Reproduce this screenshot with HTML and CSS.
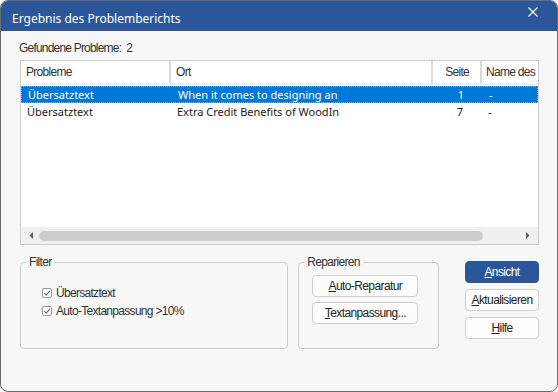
FILE: index.html
```html
<!DOCTYPE html>
<html lang="de">
<head>
  <meta charset="UTF-8" />
  <title>Ergebnis des Problemberichts</title>
  <link rel="stylesheet" href="styles.css">
</head>
<body>
  <div class="dialog">
    <div class="titlebar">
      <span class="title">Ergebnis des Problemberichts</span>
      <svg class="close" width="10" height="10" viewBox="0 0 10 10">
        <path d="M0.5 0.5 L9.5 9.5 M9.5 0.5 L0.5 9.5" stroke="#fff" stroke-width="1.1" fill="none"/>
      </svg>
    </div>

    <div class="content">
      <div class="found">Gefundene Probleme:&nbsp; 2</div>

      <div class="list">
        <div class="list-head">
          <div class="col">Probleme</div>
          <div class="col">Ort</div>
          <div class="col num">Seite</div>
          <div class="col">Name des</div>
        </div>
        <div class="row selected">
          <div class="cell">Übersatztext</div>
          <div class="cell">When it comes to designing an</div>
          <div class="cell num">1</div>
          <div class="cell">-</div>
        </div>
        <div class="row">
          <div class="cell">Übersatztext</div>
          <div class="cell">Extra Credit Benefits of WoodIn</div>
          <div class="cell num">7</div>
          <div class="cell">-</div>
        </div>
        <div class="list-fill"></div>
        <!-- horizontal scrollbar -->
        <div class="hscroll">
          <svg width="5" height="7" viewBox="0 0 5 7"><path d="M4 0 L0.5 3.5 L4 7 Z" fill="#606060"/></svg>
          <div class="thumb"></div>
          <svg width="5" height="7" viewBox="0 0 5 7"><path d="M1 0 L4.5 3.5 L1 7 Z" fill="#606060"/></svg>
        </div>
      </div>

      <div class="bottom">
        <fieldset class="group filter">
          <legend>Filter</legend>
          <label class="check">
            <svg width="10" height="10" viewBox="0 0 10 10"><rect x="0.5" y="0.5" width="9" height="9" rx="1.5" fill="#fff" stroke="#9a9a9a"/><path d="M2.2 5.2 L4.2 7.1 L7.9 2.9" stroke="#6a6a6a" stroke-width="1.1" fill="none"/></svg>
            Übersatztext
          </label>
          <label class="check">
            <svg width="10" height="10" viewBox="0 0 10 10"><rect x="0.5" y="0.5" width="9" height="9" rx="1.5" fill="#fff" stroke="#9a9a9a"/><path d="M2.2 5.2 L4.2 7.1 L7.9 2.9" stroke="#6a6a6a" stroke-width="1.1" fill="none"/></svg>
            Auto-Textanpassung &gt;10%
          </label>
        </fieldset>

        <fieldset class="group repair">
          <legend>Reparieren</legend>
          <button class="btn"><u>A</u>uto-Reparatur</button>
          <button class="btn"><u>T</u>extanpassung...</button>
        </fieldset>

        <div class="side-buttons">
          <button class="btn primary"><u>A</u>nsicht</button>
          <button class="btn"><u>A</u>ktualisieren</button>
          <button class="btn"><u>H</u>ilfe</button>
        </div>
      </div>
    </div>
  </div>
</body>
</html>
```

FILE: styles.css
```css
* {
  box-sizing: border-box;
  margin: 0;
  padding: 0;
}

body {
  background: #f7f7f7;
  font-family: "Liberation Sans", Arial, sans-serif;
  font-size: 12px;
  letter-spacing: -0.7px;
  color: #222;
}

.dialog {
  width: 558px;
  height: 392px;
  border: 1px solid #6b6b6b;
  border-radius: 8px;
  overflow: hidden;
  background: #f7f7f7;
  display: flex;
  flex-direction: column;
}

.titlebar {
  height: 30px;
  background: #2b579a;
  display: flex;
  justify-content: space-between;
  align-items: flex-start;
  padding: 0 19px 0 11px;
}

.title {
  font-family: "Noto Sans", sans-serif;
  font-size: 12px;
  letter-spacing: 0;
  line-height: 16px;
  color: #fff;
  margin-top: 10px;
}

.close {
  margin-top: 6px;
}

.content {
  flex: 1;
  display: flex;
  flex-direction: column;
  padding: 0 18px 0 19px;
}

.found {
  line-height: 16px;
  margin-top: 9px;
  margin-left: -1px;
  letter-spacing: -0.8px;
  color: #333;
}

.list {
  margin-top: 4px;
  height: 185px;
  border: 1px solid #cdcdcd;
  background: #fff;
  display: flex;
  flex-direction: column;
}

.list-head,
.row {
  display: grid;
  grid-template-columns: 150px 262px 49px 56px;
}

.list-head {
  height: 24px;
  border-bottom: 1px solid #ececec;
}

.col {
  border-right: 2px solid #dadada;
  padding: 0 5px;
  line-height: 23px;
  white-space: nowrap;
  overflow: hidden;
  color: #333;
}

.col:last-child {
  border-right: none;
  padding-left: 4px;
}

.num {
  text-align: right;
  padding-right: 11px;
}

.row {
  height: 17px;
  font-family: "Noto Sans", sans-serif;
  font-size: 11px;
  letter-spacing: 0;
  line-height: 15px;
  color: #1a1a1a;
}

.row.selected {
  margin-top: 1px;
  background: #0078d7;
  color: #fff;
  border: 1px dotted #e8a040;
}

.cell {
  padding: 0 6px;
  white-space: nowrap;
  overflow: hidden;
}

.row:not(.selected) .cell {
  padding-top: 1px;
}

.row .num {
  padding-right: 19px;
}

.list-fill {
  flex: 1;
}

.hscroll {
  height: 17px;
  background: #f0f0f0;
  display: flex;
  align-items: center;
  gap: 5px;
  padding: 0 8px 0 8px;
}

.thumb {
  height: 10px;
  width: 444px;
  border-radius: 5px;
  background: #cdcdcd;
}

.hscroll svg:last-child {
  margin-left: auto;
}

.bottom {
  display: flex;
  margin-top: 10px;
}

.group {
  border: 1px solid #cdcdcd;
  border-radius: 4px;
  height: 94px;
}

.group legend {
  padding: 0 3px;
  line-height: 14px;
  color: #333;
}

.filter {
  width: 269px;
  padding: 15px 0 0 21px;
}

.filter legend {
  margin-left: -16px;
}

.check {
  display: flex;
  align-items: center;
  gap: 4px;
  height: 18px;
  color: #333;
}

.repair {
  width: 141px;
  margin-left: 10px;
  padding: 6px 0 0 13px;
  display: flex;
  flex-direction: column;
  gap: 5px;
}

.repair legend {
  margin-left: -8px;
}

.btn {
  width: 106px;
  height: 22px;
  background: #fdfdfd;
  border: 1px solid #d0d0d0;
  border-radius: 4px;
  font-family: "Liberation Sans", Arial, sans-serif;
  font-size: 12px;
  letter-spacing: -0.6px;
  color: #222;
}

.side-buttons {
  margin-left: 26px;
  margin-top: 6px;
  display: flex;
  flex-direction: column;
  gap: 6px;
}

.side-buttons .btn {
  width: 74px;
}

.btn.primary {
  background: #2b579a;
  border-color: #2b579a;
  color: #fff;
}
```
